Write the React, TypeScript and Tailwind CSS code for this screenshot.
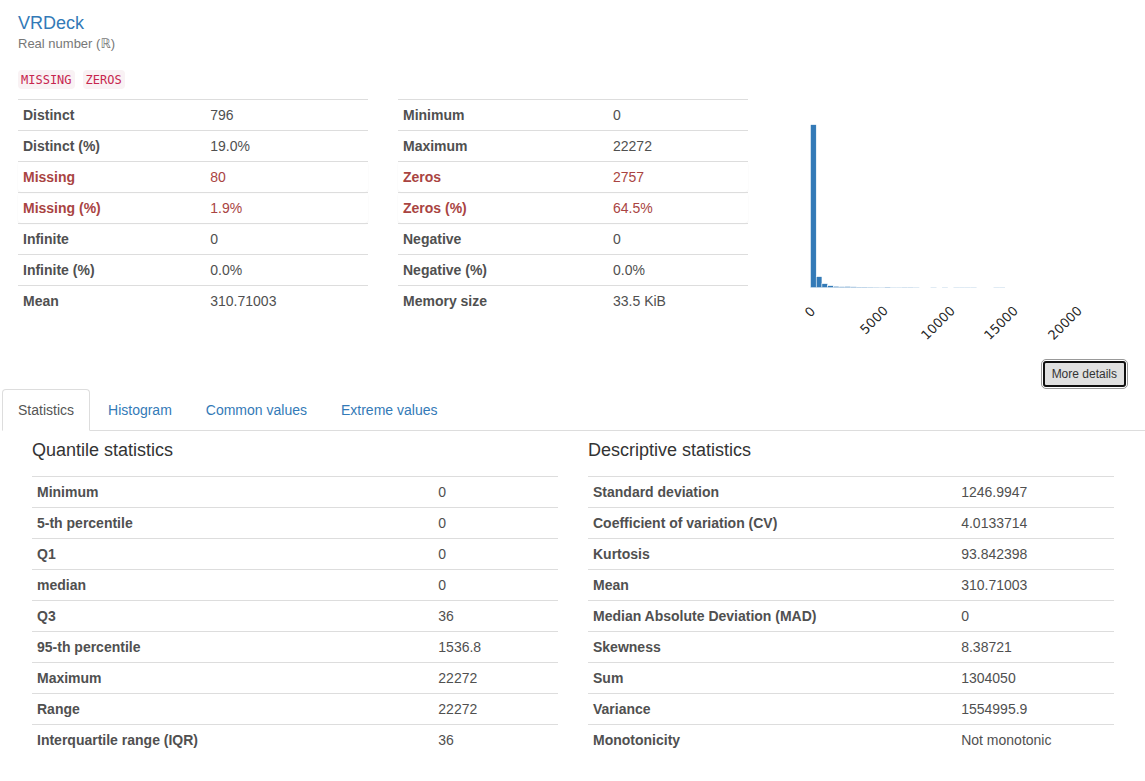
type Row = { label: string; value: string; alert?: boolean };

const overviewLeft: Row[] = [
  { label: "Distinct", value: "796" },
  { label: "Distinct (%)", value: "19.0%" },
  { label: "Missing", value: "80", alert: true },
  { label: "Missing (%)", value: "1.9%", alert: true },
  { label: "Infinite", value: "0" },
  { label: "Infinite (%)", value: "0.0%" },
  { label: "Mean", value: "310.71003" },
];

const overviewRight: Row[] = [
  { label: "Minimum", value: "0" },
  { label: "Maximum", value: "22272" },
  { label: "Zeros", value: "2757", alert: true },
  { label: "Zeros (%)", value: "64.5%", alert: true },
  { label: "Negative", value: "0" },
  { label: "Negative (%)", value: "0.0%" },
  { label: "Memory size", value: "33.5 KiB" },
];

const quantiles: Row[] = [
  { label: "Minimum", value: "0" },
  { label: "5-th percentile", value: "0" },
  { label: "Q1", value: "0" },
  { label: "median", value: "0" },
  { label: "Q3", value: "36" },
  { label: "95-th percentile", value: "1536.8" },
  { label: "Maximum", value: "22272" },
  { label: "Range", value: "22272" },
  { label: "Interquartile range (IQR)", value: "36" },
];

const descriptive: Row[] = [
  { label: "Standard deviation", value: "1246.9947" },
  { label: "Coefficient of variation (CV)", value: "4.0133714" },
  { label: "Kurtosis", value: "93.842398" },
  { label: "Mean", value: "310.71003" },
  { label: "Median Absolute Deviation (MAD)", value: "0" },
  { label: "Skewness", value: "8.38721" },
  { label: "Sum", value: "1304050" },
  { label: "Variance", value: "1554995.9" },
  { label: "Monotonicity", value: "Not monotonic" },
];

function StatsTable({ rows, labelWidth }: { rows: Row[]; labelWidth: string }) {
  return (
    <table className="w-full table-fixed border-separate border-spacing-0 text-left">
      <colgroup>
        <col className={labelWidth} />
        <col />
      </colgroup>
      <tbody>
        {rows.map((row) => (
          <tr
            key={row.label}
            className={
              row.alert
                ? "rounded-sm text-[#a94442] shadow-[0_1px_2px_rgba(0,0,0,0.05)]"
                : "text-[#505050]"
            }
          >
            <th scope="row" className="border-t border-[#dddddd] p-[5px] font-bold">
              {row.label}
            </th>
            <td className="border-t border-[#dddddd] p-[5px]">{row.value}</td>
          </tr>
        ))}
      </tbody>
    </table>
  );
}

const bars = [163, 11, 4, 2, 1.4, 1, 1.2, 0.9, 0.6, 0.6, 0.5, 0.4, 0.3, 0.6, 0.3, 0.3, 0.4, 0.4, 0.3, 0, 0, 0.3, 0, 0.3, 0, 0.3, 0.3, 0.3, 0.3, 0, 0, 0, 0.3, 0.3];

const ticks = [
  { label: "0", x: 32, y: 213 },
  { label: "5000", x: 96, y: 221 },
  { label: "10000", x: 160, y: 224 },
  { label: "15000", x: 223, y: 224 },
  { label: "20000", x: 287, y: 224 },
];

function Histogram() {
  return (
    <svg viewBox="0 0 350 250" className="block w-full" role="img" aria-label="Histogram">
      {bars.map((h, i) => (
        <rect
          key={i}
          x={32.5 + i * 5.72}
          y={188.7 - h}
          width={5.72}
          height={h}
          fill="#337ab7"
          stroke="#ffffff"
          strokeWidth={0.5}
        />
      ))}
      {ticks.map((t) => (
        <text
          key={t.label}
          transform={`translate(${t.x} ${t.y}) rotate(-45)`}
          textAnchor="middle"
          dominantBaseline="central"
          fontSize={13}
          fill="#262626"
          className="font-['DejaVu_Sans',sans-serif]"
        >
          {t.label}
        </text>
      ))}
    </svg>
  );
}

const tabs = ["Histogram", "Common values", "Extreme values"];

export default function App() {
  return (
    <main className="min-h-screen bg-white pb-4 font-['Liberation_Sans',Arial,sans-serif] text-sm leading-5 text-[#333333]">
      <section className="pr-[17px] pl-[18px]">
        <div className="grid grid-cols-3 gap-x-[30px]">
          <header className="col-span-3 pt-[13px]">
            <h1 className="text-lg leading-5">
              <a href="#vrdeck" className="text-[#337ab7]">
                VRDeck
              </a>
            </h1>
            <p className="pt-px text-[13px] text-[#777777]">
              Real number (<span className="font-['DejaVu_Sans',sans-serif]">ℝ</span>)
            </p>
          </header>
          <div>
            <div className="flex gap-2 pt-4 pb-2.5 text-xs leading-[17px] text-[#c7254e]">
              <code className="rounded bg-[#f9f2f4] px-[3px] pt-0.5 font-['DejaVu_Sans_Mono',monospace]">MISSING</code>
              <code className="rounded bg-[#f9f2f4] px-[3px] pt-0.5 font-['DejaVu_Sans_Mono',monospace]">ZEROS</code>
            </div>
            <StatsTable rows={overviewLeft} labelWidth="w-[53.5%]" />
          </div>
          <div className="pt-[45px]">
            <StatsTable rows={overviewRight} labelWidth="w-[60%]" />
          </div>
          <div className="pt-[45px]">
            <Histogram />
          </div>
        </div>
        <div className="flex justify-end pt-3 pr-0.5">
          <button
            type="button"
            className="rounded-[3px] border-2 border-[#101010] bg-[#e0e0e0] px-[7px] py-0.5 text-xs leading-[18px] text-[#333333] outline outline-offset-1 outline-[#999999]"
          >
            More details
          </button>
        </div>
      </section>

      <nav className="mt-0.5 ml-0.5 flex gap-0.5 border-b border-[#dddddd]">
        <a
          href="#statistics"
          className="-mb-px rounded-t border border-[#dddddd] border-b-white bg-white px-[15px] py-2.5 text-[#555555]"
        >
          Statistics
        </a>
        {tabs.map((tab) => (
          <a key={tab} href="#details" className="-mb-px border border-transparent px-[15px] py-2.5 text-[#337ab7]">
            {tab}
          </a>
        ))}
      </nav>

      <section className="grid grid-cols-2 gap-x-[30px] pt-[9px] pr-[31px] pl-8">
        <div>
          <h2 className="pb-4 text-lg leading-5">Quantile statistics</h2>
          <StatsTable rows={quantiles} labelWidth="w-[76.3%]" />
        </div>
        <div>
          <h2 className="pb-4 text-lg leading-5">Descriptive statistics</h2>
          <StatsTable rows={descriptive} labelWidth="w-[70%]" />
        </div>
      </section>
    </main>
  );
}
